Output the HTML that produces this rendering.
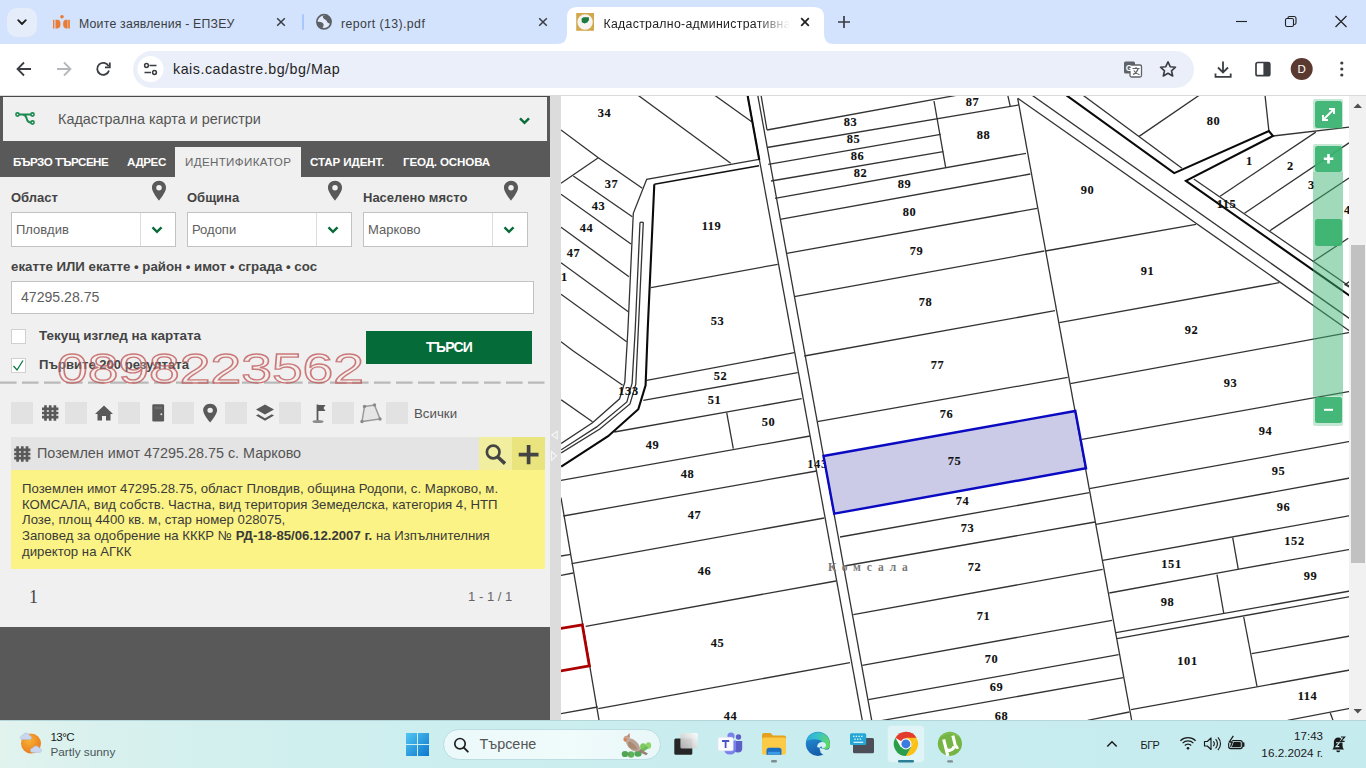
<!DOCTYPE html>
<html lang="bg">
<head>
<meta charset="utf-8">
<title>Кадастрално-административна информационна система</title>
<style>
*{box-sizing:border-box;margin:0;padding:0}
html,body{width:1366px;height:768px;overflow:hidden;background:#fff;font-family:"Liberation Sans",sans-serif;}
.abs{position:absolute}
#root{position:relative;width:1366px;height:768px;overflow:hidden;background:#fff}
.t{position:absolute;white-space:nowrap;line-height:1}
/* chrome */
#tabstrip{left:0;top:0;width:1366px;height:44px;background:#d3e3fd}
#toolbar{left:0;top:44px;width:1366px;height:51px;background:#fff}
#tbline{left:0;top:95px;width:1366px;height:1px;background:#dadada}
#urlpill{left:133px;top:51px;width:1061px;height:37px;border-radius:18.5px;background:#ebeff9}
.tabtxt{font-size:12.3px;color:#3a3d42;top:18px}
/* panel */
#panel{left:0;top:96px;width:550px;height:624px;background:#595959}
#divider{left:550px;top:96px;width:11px;height:624px;background:#dcdcdc}
.lbl{font-weight:bold;font-size:13px;color:#444}
.sel{position:absolute;height:35px;background:#fff;border:1px solid #c2c2c2}
.sel i{position:absolute;right:34px;top:0;bottom:0;width:1px;background:#dcdcdc}
.seltxt{font-size:13px;color:#5e5e5e}
.tab{font-size:11.6px;color:#fff;top:155.6px;font-weight:bold}
.sq{position:absolute;width:22px;height:22px;top:402px;background:#e2e2e2}
/* taskbar */
#taskbar{left:0;top:720px;width:1366px;height:48px;background:linear-gradient(90deg,#e2f3ee 0%,#d9f1ee 7%,#cfefee 22%,#c9edef 50%,#c6ebef 100%);border-top:1px solid #b4d6da}
</style>
</head>
<body>
<div id="root">

<!-- ================= BROWSER CHROME ================= -->
<div id="tabstrip" class="abs"></div>
<div id="toolbar" class="abs"></div>
<div id="tbline" class="abs"></div>
<div id="urlpill" class="abs"></div>

<!-- tab search -->
<div class="abs" style="left:7px;top:7.5px;width:30px;height:29px;border-radius:10px;background:#e5edfb"></div>
<svg class="abs" style="left:0;top:0" width="1366" height="96" viewBox="0 0 1366 96" fill="none">
  <!-- chevron -->
  <path d="M18.2 20.2 L22 24 L25.8 20.2" stroke="#1f1f1f" stroke-width="1.8" stroke-linecap="round" stroke-linejoin="round"/>
  <!-- favicon 1 (EPZEU) -->
  <g fill="#ea7b34">
    <rect x="53" y="19.8" width="1.1" height="8.7"/>
    <rect x="54.7" y="19.8" width="0.9" height="8.7" opacity=".85"/>
    <path d="M56 19.8 h1.5 q3 0 3 4.3 q0 4.4 -3 4.4 h-1.5z"/>
    <circle cx="62" cy="16.8" r="1.8"/>
    <path d="M67.6 19.8 h-1.5 q-3 0 -3 4.3 q0 4.4 3 4.4 h1.5z"/>
    <rect x="68.2" y="19.8" width="1.7" height="8.7"/>
  </g>
  <!-- close 1 -->
  <path d="M277.2 18.2 L284.8 25.8 M284.8 18.2 L277.2 25.8" stroke="#3a3d42" stroke-width="1.5"/>
  <!-- separator -->
  <rect x="302" y="14" width="2" height="16" rx="1" fill="#a8c7fa"/>
  <!-- globe -->
  <circle cx="324" cy="21.8" r="7.1" fill="#e2ebfb" stroke="#5d6066" stroke-width="1.7"/>
  <path d="M322.8 16 Q322.5 18.5 325 19.5 Q327 20.3 327.5 22.5 Q329 24 331 23.5 Q332 19.5 329.5 16.8 Q326.5 14 322.8 16z" fill="#5d6066"/>
  <path d="M316.6 22.3 Q319.5 21.2 322.5 22.8 Q324.5 24.5 323 27 Q322 28.8 321.3 29 Q317 27.5 316.6 22.3z" fill="#5d6066"/>
  <!-- close 2 -->
  <path d="M539.2 18.2 L546.8 25.8 M546.8 18.2 L539.2 25.8" stroke="#3a3d42" stroke-width="1.5"/>
  <!-- active tab -->
  <path d="M557 44 Q567 44 567 34 L567 17 Q567 7 577 7 L814 7 Q824 7 824 17 L824 34 Q824 44 834 44 Z" fill="#fff"/>
  <!-- favicon 3 -->
  <rect x="576.2" y="13" width="17.8" height="17.8" fill="#d3a84c"/>
  <circle cx="585.1" cy="22" r="7.7" fill="#f6f3f1"/>
  <path d="M581.5 18.8 L583.5 17.3 L588.8 17.2 L589 20 L587.3 22.5 L584.5 23.6 L581.8 22.3 Z" fill="#1c7a3e"/>
  <!-- close 3 -->
  <path d="M801.2 18.2 L808.8 25.8 M808.8 18.2 L801.2 25.8" stroke="#1f1f1f" stroke-width="1.7"/>
  <!-- plus -->
  <path d="M844 16 V28 M838 22 H850" stroke="#3a3d42" stroke-width="1.7"/>
  <!-- window controls -->
  <path d="M1236 21.5 H1247" stroke="#222" stroke-width="1.1"/>
  <rect x="1285.5" y="18.5" width="8" height="8" rx="1.5" stroke="#222" stroke-width="1.1"/>
  <path d="M1288 18.5 V17.5 Q1288 16.5 1289.5 16.5 H1294 Q1296 16.5 1296 18.5 V23 Q1296 24.5 1294 24.5" stroke="#222" stroke-width="1.1"/>
  <path d="M1335.5 16 L1346.5 27 M1346.5 16 L1335.5 27" stroke="#222" stroke-width="1.2"/>
  <!-- toolbar white rounded corner handled by toolbar div -->
  <!-- back -->
  <path d="M31 69 H18 M24 62.5 L17.5 69 L24 75.5" stroke="#3a3d42" stroke-width="1.8" stroke-linejoin="miter"/>
  <!-- forward -->
  <path d="M57 69 H70 M64 62.5 L70.5 69 L64 75.5" stroke="#b4b7bb" stroke-width="1.8"/>
  <!-- reload -->
  <path d="M108.6 66.2 A6 6 0 1 0 109 70.5" stroke="#3a3d42" stroke-width="1.8"/>
  <path d="M109.8 62.5 V67.3 H105" stroke="#3a3d42" stroke-width="1.8"/>
  <!-- site info circle -->
  <circle cx="150.5" cy="69" r="13" fill="#fff"/>
  <path d="M149.5 65.5 H156.5 M144.5 72.5 H151" stroke="#3a3d42" stroke-width="1.7"/>
  <circle cx="146.5" cy="65.5" r="1.9" stroke="#3a3d42" stroke-width="1.5"/>
  <circle cx="154.5" cy="72.5" r="1.9" stroke="#3a3d42" stroke-width="1.5"/>
  <!-- translate -->
  <rect x="1124" y="61.5" width="11" height="12" rx="1.5" fill="#5f6368"/>
  <rect x="1130" y="65" width="11.5" height="12" rx="1.5" fill="#fff" stroke="#5f6368" stroke-width="1.3"/>
  <text x="1125.8" y="71" font-family="Liberation Sans" font-size="8.5" font-weight="bold" fill="#fff">G</text>
  <path d="M1132.5 68.5 H1139.5 M1136 67 V68.5 M1138.3 68.5 Q1137 72.5 1133 74.5 M1133.8 70.5 Q1135.5 73.5 1139.5 74.8" stroke="#5f6368" stroke-width="1.1"/>
  <!-- star -->
  <path d="M1168 61.8 L1170.2 66.7 L1175.5 67.2 L1171.5 70.8 L1172.7 76 L1168 73.2 L1163.3 76 L1164.5 70.8 L1160.5 67.2 L1165.8 66.7 Z" stroke="#3a3d42" stroke-width="1.6" stroke-linejoin="round"/>
  <!-- download -->
  <path d="M1223 61.5 V72 M1218 67.5 L1223 72.5 L1228 67.5 M1215.5 73.5 V76.8 H1230.7 V73.5" stroke="#3a3d42" stroke-width="1.8"/>
  <!-- side panel -->
  <rect x="1256" y="62.5" width="13.8" height="13.2" rx="1.8" stroke="#3a3d42" stroke-width="1.7"/>
  <rect x="1263.4" y="62.5" width="6.4" height="13.2" fill="#3a3d42"/>
  <!-- avatar -->
  <circle cx="1301.7" cy="69" r="11" fill="#5a3a30"/>
  <text x="1301.7" y="73.3" text-anchor="middle" font-family="Liberation Sans" font-size="11.5" fill="#fff">D</text>
  <!-- menu -->
  <circle cx="1341.8" cy="63" r="1.6" fill="#3a3d42"/><circle cx="1341.8" cy="69" r="1.6" fill="#3a3d42"/><circle cx="1341.8" cy="75" r="1.6" fill="#3a3d42"/>
</svg>
<div class="t tabtxt" style="left:79px;letter-spacing:0.2px">Моите заявления - ЕПЗЕУ</div>
<div class="t tabtxt" style="left:341px;letter-spacing:0.42px">report (13).pdf</div>
<div class="t tabtxt" style="left:603.5px;width:186px;overflow:hidden;color:#1f1f1f;letter-spacing:0.3px;-webkit-mask-image:linear-gradient(90deg,#000 82%,transparent 100%);mask-image:linear-gradient(90deg,#000 82%,transparent 100%)">Кадастрално-административна информационна</div>
<div class="t" style="left:173px;top:62px;font-size:14.3px;letter-spacing:0.5px;color:#1f1f1f">kais.cadastre.bg/bg/Map</div>
<!--CHROME-->

<!-- ================= LEFT PANEL ================= -->
<div id="panel" class="abs"></div>
<div id="divider" class="abs"></div>

<div class="abs" style="left:0;top:96px;width:550px;height:1px;background:#4a4a4a"></div>
<div class="abs" style="left:3px;top:97px;width:544px;height:44px;background:#f0f0f0"></div>
<div class="abs" style="left:0;top:177.4px;width:547px;height:449.6px;background:#f0f0f0"></div>
<div class="abs" style="left:547px;top:177.4px;width:3px;height:449.6px;background:#f0f0f0"></div>
<div class="abs" style="left:175px;top:147px;width:126px;height:31px;background:#f0f0f0"></div>
<div class="t" style="left:58px;top:111.5px;font-size:14.4px;color:#555">Кадастрална карта и регистри</div>
<div class="t tab" style="left:13px;letter-spacing:-0.5px">БЪРЗО ТЪРСЕНЕ</div>
<div class="t tab" style="left:127px;letter-spacing:-0.4px">АДРЕС</div>
<div class="t tab" style="left:185px;color:#666;font-weight:normal;letter-spacing:0.35px">ИДЕНТИФИКАТОР</div>
<div class="t tab" style="left:310px;letter-spacing:-0.1px">СТАР ИДЕНТ.</div>
<div class="t tab" style="left:403px;letter-spacing:-0.15px">ГЕОД. ОСНОВА</div>
<div class="t lbl" style="left:11px;top:191px">Област</div>
<div class="t lbl" style="left:187px;top:191px">Община</div>
<div class="t lbl" style="left:363px;top:191px">Населено място</div>
<div class="sel" style="left:11px;top:212px;width:165px"><i></i></div>
<div class="sel" style="left:187px;top:212px;width:165px"><i></i></div>
<div class="sel" style="left:363px;top:212px;width:165px"><i></i></div>
<div class="t seltxt" style="left:16px;top:222.8px">Пловдив</div>
<div class="t seltxt" style="left:192px;top:222.8px">Родопи</div>
<div class="t seltxt" style="left:368px;top:222.8px">Марково</div>
<div class="t lbl" style="left:11px;top:260px;font-size:13.27px">екатте ИЛИ екатте • район • имот • сграда • сос</div>
<div class="abs" style="left:11px;top:281px;width:523px;height:33px;background:#fff;border:1px solid #c2c2c2"></div>
<div class="t seltxt" style="left:21px;top:290px;font-size:14.1px">47295.28.75</div>
<div class="abs" style="left:11px;top:329px;width:15px;height:15px;background:#fff;border:1px solid #d0d0d0"></div>
<div class="abs" style="left:11px;top:358px;width:15px;height:15px;background:#fff;border:1px solid #d0d0d0"></div>
<div class="t lbl" style="left:39px;top:329px;font-size:13.43px">Текущ изглед на картата</div>
<div class="t lbl" style="left:39px;top:358px;font-size:13.08px">Първите 200 резултата</div>
<div class="abs" style="left:366px;top:331px;width:166px;height:33px;background:#056b38"></div>
<div class="t" style="left:366px;width:166px;text-align:center;top:339.5px;font-size:14px;font-weight:bold;letter-spacing:-0.75px;color:#fff">ТЪРСИ</div>
<div class="sq" style="left:11px"></div><div class="sq" style="left:65.2px"></div><div class="sq" style="left:117.8px"></div><div class="sq" style="left:171.7px"></div><div class="sq" style="left:225px"></div><div class="sq" style="left:279.2px"></div><div class="sq" style="left:332.1px"></div><div class="sq" style="left:386.2px"></div>
<div class="t" style="left:414px;top:406.5px;font-size:13.3px;color:#555">Всички</div>
<div class="abs" style="left:11px;top:437px;width:534px;height:33px;background:#e4e4e4"></div>
<div class="abs" style="left:479px;top:437px;width:33px;height:33px;background:#f1ee9f"></div>
<div class="abs" style="left:512px;top:437px;width:33px;height:33px;background:#e9e47e"></div>
<div class="t" style="left:37px;top:446px;font-size:14.39px;color:#555">Поземлен имот 47295.28.75 с. Марково</div>
<div class="abs" style="left:11px;top:470px;width:534px;height:98.5px;background:#fbf385"></div>
<div class="abs" style="left:22px;top:481.3px;width:520px;font-size:13.2px;line-height:15.6px;color:#3a3a3a;white-space:nowrap">Поземлен имот 47295.28.75, област Пловдив, община Родопи, с. Марково, м.<br>КОМСАЛА, вид собств. Частна, вид територия Земеделска, категория 4, НТП<br>Лозе, площ 4400 кв. м, стар номер 028075,<br>Заповед за одобрение на КККР № <b>РД-18-85/06.12.2007 г.</b> на Изпълнителния<br>директор на АГКК</div>
<div class="t" style="left:29px;top:588px;font-family:'Liberation Serif',serif;font-size:18px;color:#444">1</div>
<div class="t" style="left:468px;top:589.5px;font-size:13.1px;color:#666">1 - 1 / 1</div>
<svg class="abs" style="left:0;top:96px" width="561" height="624" viewBox="0 96 561 624" fill="none">
  <!-- header icon -->
  <g stroke="#1d8a52" stroke-width="2">
    <path d="M18 114.5 H22.5 Q25.5 114.5 26.5 118 Q27.5 122.5 31 122.5 M22.5 114.5 H31"/>
    <circle cx="17.5" cy="114.5" r="1.6" fill="#f0f0f0" stroke-width="1.6"/><circle cx="32.5" cy="114.5" r="1.6" fill="#f0f0f0" stroke-width="1.6"/><circle cx="32.5" cy="122.5" r="1.6" fill="#f0f0f0" stroke-width="1.6"/>
  </g>
  <path d="M520.0 118.3 L524.5 122.8 L529.0 118.3" stroke="#0a6b3a" stroke-width="2.4" fill="none" stroke-linejoin="miter"/>
  <path transform="translate(151.3,180.3) scale(1.1)" d="M7 0.5 C3.2 0.5 0.6 3.3 0.6 6.8 C0.6 11 7 18.5 7 18.5 C7 18.5 13.4 11 13.4 6.8 C13.4 3.3 10.8 0.5 7 0.5 Z M7 4.3 A2.5 2.5 0 1 1 7 9.3 A2.5 2.5 0 1 1 7 4.3 Z" fill="#595959" fill-rule="evenodd"/><path transform="translate(327.3,180.3) scale(1.1)" d="M7 0.5 C3.2 0.5 0.6 3.3 0.6 6.8 C0.6 11 7 18.5 7 18.5 C7 18.5 13.4 11 13.4 6.8 C13.4 3.3 10.8 0.5 7 0.5 Z M7 4.3 A2.5 2.5 0 1 1 7 9.3 A2.5 2.5 0 1 1 7 4.3 Z" fill="#595959" fill-rule="evenodd"/><path transform="translate(503.3,180.3) scale(1.1)" d="M7 0.5 C3.2 0.5 0.6 3.3 0.6 6.8 C0.6 11 7 18.5 7 18.5 C7 18.5 13.4 11 13.4 6.8 C13.4 3.3 10.8 0.5 7 0.5 Z M7 4.3 A2.5 2.5 0 1 1 7 9.3 A2.5 2.5 0 1 1 7 4.3 Z" fill="#595959" fill-rule="evenodd"/>
  <path d="M152.5 227.3 L157 231.8 L161.5 227.3" stroke="#0a6b3a" stroke-width="2.4" fill="none" stroke-linejoin="miter"/><path d="M328.5 227.3 L333 231.8 L337.5 227.3" stroke="#0a6b3a" stroke-width="2.4" fill="none" stroke-linejoin="miter"/><path d="M504.5 227.3 L509 231.8 L513.5 227.3" stroke="#0a6b3a" stroke-width="2.4" fill="none" stroke-linejoin="miter"/>
  <!-- check -->
  <path d="M13.5 366 L17 370 L23 360.5" stroke="#0a7a40" stroke-width="1.3"/>
  <!-- dashed line -->
  <path d="M0 382.7 H544.5" stroke="#b9b9b9" stroke-width="2.2" stroke-dasharray="16.6 5.4"/>
  <!-- icon row -->
  <g stroke="#595959" stroke-width="2.7"><path d="M45.5 405.2 V420.8 M50.2 405.2 V420.8 M54.9 405.2 V420.8 M42 408.8 H58.4 M42 413 H58.4 M42 417.2 H58.4"/></g>
  <path d="M95 414 L104 405.5 L113 414 H110.5 V420.5 H106 V416 H102 V420.5 H97.5 V414 Z" fill="#595959"/>
  <rect x="152.3" y="404.3" width="11.8" height="17.2" rx="1.3" fill="#595959"/><rect x="154.3" y="406.6" width="7.8" height="2.6" fill="#6e6e6e"/><circle cx="161.3" cy="414.3" r="1" fill="#e0e0e0"/>
  <path transform="translate(202.5,403.2) scale(1.09,1.04)" d="M7 0.5 C3.2 0.5 0.6 3.3 0.6 6.8 C0.6 11 7 18.5 7 18.5 C7 18.5 13.4 11 13.4 6.8 C13.4 3.3 10.8 0.5 7 0.5 Z M7 4.3 A2.5 2.5 0 1 1 7 9.3 A2.5 2.5 0 1 1 7 4.3 Z" fill="#595959" fill-rule="evenodd"/>
  <path d="M265 404.5 L274 409.5 L265 414.5 L256 409.5 Z" fill="#595959"/>
  <path d="M258.2 414.2 L256 415.5 L265 420.8 L274 415.5 L271.8 414.2 L265 418.2 Z" fill="#595959"/>
  <path d="M317.5 404.5 V421" stroke="#595959" stroke-width="1.8"/><path d="M318 405 H325.5 L323.5 408 L325.5 411 H318 Z" fill="#595959"/><ellipse cx="318" cy="421.5" rx="5.5" ry="1.5" fill="#8a8a8a"/>
  <path d="M364.5 406.5 L374.5 405 L380 419 L362 421.5 Z" stroke="#9a9a9a" stroke-width="1.5" fill="#e6e6e6"/>
  <g fill="#8a8a8a"><circle cx="364.5" cy="406.5" r="1.7"/><circle cx="374.5" cy="405" r="1.7"/><circle cx="380" cy="419" r="1.7"/><circle cx="362" cy="421.5" r="1.7"/></g>
  <!-- result row icons -->
  <g stroke="#595959" stroke-width="2.7"><path d="M17.6 446.2 V461.8 M22.3 446.2 V461.8 M27 446.2 V461.8 M14.2 449.8 H30.4 M14.2 454 H30.4 M14.2 458.2 H30.4"/></g>
  <circle cx="493.2" cy="452" r="6.3" stroke="#444" stroke-width="2.7"/><path d="M497.8 457 L505 463.6" stroke="#444" stroke-width="3.5"/>
  <path d="M528.6 445 V464.2 M518.7 454.6 H538.5" stroke="#444" stroke-width="3.7"/>
  <!-- divider handles -->
  <path d="M557.2 431.2 L551.8 435 L557.2 438.8 Z M551.5 451.5 L556.5 455.8 L551.5 460.2 Z" stroke="#f6f6f6" stroke-width="1.1" fill="none"/>
</svg>
<!-- watermark -->
<svg class="abs" style="left:50px;top:345px" width="330" height="50" viewBox="50 345 330 50">
  <text x="57" y="383" font-family="Liberation Sans" font-size="42.5" textLength="307" lengthAdjust="spacingAndGlyphs" fill="rgba(255,235,235,0.22)" stroke="rgba(190,80,80,0.75)" stroke-width="1.3">0898223562</text>
</svg>
<!--PANEL-->

<!-- ================= MAP ================= -->
<!--MAPSTART--><svg class="abs" style="left:561px;top:96px" width="789" height="624" viewBox="561 96 789 624" fill="none">
<rect x="561" y="96" width="789" height="624" fill="#fff"/>
<text x="817.5" y="467.9" font-family="Liberation Serif" font-weight="bold" font-size="12.4" letter-spacing="0.6" fill="#111" text-anchor="middle">143</text>
<path d="M823.5 456 L1075.3 411 L1086 468.3 L834.2 513.7 Z" fill="#cbcbe8"/>
<g stroke="#333" stroke-width="1.3">
<path d="M747.5 95 L862.4 721"/>
<path d="M757.7 95 L871.8 721"/>
<path d="M1017.7 98.3 L1131.8 721"/>
<path d="M761.0 95.0 L767.0 130.0"/>
<path d="M767.0 130.0 L958 95"/>
<path d="M767 147.5 L1018.9 104.9"/>
<path d="M934.0 101.0 L945.7 167.7"/>
<path d="M1007.7 95 L1010.3 106.7"/>
<path d="M768.3 164.3 L940.7 134.3"/>
<path d="M771.0 181.0 L943.3 151.7"/>
<path d="M775 198.3 L1026 153.3"/>
<path d="M780 219.3 L1030.3 174"/>
<path d="M786.7 253.3 L1037 208.3"/>
<path d="M794.3 296.7 L1044.3 251"/>
<path d="M804.3 356 L1055 310.7"/>
<path d="M817.3 421.7 L1067.7 377.4"/>
<path d="M840 537 L1089.3 492.7"/>
<path d="M844.3 566 L1095 522"/>
<path d="M853.3 614.7 L1102.7 569.3"/>
<path d="M862.3 665.3 L1112 620.3"/>
<path d="M868.3 699.7 L1118.7 654.7"/>
<path d="M872 722.3 L1123.3 677.7"/>
<path d="M1087.7 720.3 L1129.3 712"/>
<path d="M1017.7 98.3 L1350 331.2"/>
<path d="M1031.7 95 L1350 318.9"/>
<path d="M1045.3 251 L1196 224.3"/>
<path d="M1059.3 322.7 L1279.3 282.7"/>
<path d="M1070.3 383.7 L1350 332.4"/>
<path d="M1082 439.3 L1350 391.4"/>
<path d="M1089.3 488.7 L1350 441.4"/>
<path d="M1096 524.3 L1350 478"/>
<path d="M1102.7 560.3 L1350 515.7"/>
<path d="M1109.3 593 L1237.7 569.3 L1350 549.4"/>
<path d="M1232.7 537.7 L1238.3 569.3"/>
<path d="M1217 574.7 L1223.7 613"/>
<path d="M1116 632.7 L1350 591"/>
<path d="M1117 638.7 L1350 596.7"/>
<path d="M1243.7 617 L1257 686.3"/>
<path d="M1131 709.7 L1350 670"/>
<path d="M1251.7 653.7 L1350 636"/>
<path d="M1287.7 720.3 L1350 708.4"/>
<path d="M1330.3 713 L1333 720.3"/>
<path d="M1082.7 95 L1182.0 168.2"/>
<path d="M1193.8 179.0 L1350 286.7"/>
<path d="M1139.1 136.4 L1199.6 95.0"/>
<path d="M1265.0 95.0 L1268.9 131.1"/>
<path d="M1272.9 136.0 L1349.0 127.2"/>
<path d="M1220.1 196.2 L1315.8 132.1"/>
<path d="M1244.5 213.2 L1349.0 142.9"/>
<path d="M1269.9 230.7 L1349.0 178.0"/>
<path d="M1312.7 261.7 L1348.3 238.3"/>
<path d="M1349.5 281.5 L1345 284.6 L1349.5 287.3"/>
<path d="M561 497.7 L599.5 723"/>
<path d="M646.7 380.3 L794.3 352.7"/>
<path d="M643.3 400.3 L797.7 372.7"/>
<path d="M614.3 432.0 L801.7 398.7"/>
<path d="M561.0 480.3 L810.0 436.0"/>
<path d="M726.7 412.7 L733.3 448.7"/>
<path d="M563.3 516.0 L816.7 471.0"/>
<path d="M571.7 563.7 L824.3 518.0"/>
<path d="M585.7 626.3 L836.0 581.0"/>
<path d="M598.3 708.7 L850.0 662.7"/>
<path d="M561.0 556.0 L571.0 554.3"/>
<path d="M561.0 575.3 L573.3 573.0"/>
<path d="M561.0 713.7 L597.7 707.0"/>
<path d="M651.0 287.7 L777.7 264.3"/>
<path d="M637.7 95.0 L730.7 163.3"/>
<path d="M714.3 95.0 L751.7 121.7"/>
<path d="M561.0 130.0 L598.3 157.7 L642.3 188.3"/>
<path d="M561.0 183.3 L598.3 157.7"/>
<path d="M573.3 176.0 L632.3 216.7"/>
<path d="M561.0 194.3 L631.0 244.0"/>
<path d="M561.0 227.3 L629.0 276.7"/>
<path d="M561.0 262.7 L628.3 311.7"/>
<path d="M561.0 294.3 L626.7 341.7"/>
<path d="M561.0 341.7 L573.3 351 L622.7 385.2"/>
<path d="M561.2 399.8 L592.5 421.7"/>
<path d="M759.0 159.3 L646.7 179.3 L633.3 213.3 L627.9 330.0 L624.8 382.1 L619.6 398.8 L592.5 422.7 L561.2 443.5"/>
<path d="M640.0 222.3 L635.2 330.0 L632.1 383.1 L626.9 401.9 L596.7 426.9 L561.2 449.8"/>
<path d="M643.3 222.3 L638.3 330.0 L635.8 384.2 L630.0 404.0 L599.8 429.0 L561.2 452.9"/>
<path d="M640.0 222.3 L643.3 222.3"/>
</g>
<g stroke="#0a0a0a" stroke-width="2.1" stroke-linejoin="miter">
<path d="M747.5 95 L759.3 160"/>
<path d="M1066 95 L1174.2 173.1 L1268.9 131.1 L1272.9 136.0 L1185.9 180.9 L1350 296"/>
<path d="M654.3 184.3 L647.7 330.0 L645.6 385.2 L638.3 409.2 L608.1 436.2 L561.2 466.5"/>
</g>
<g stroke="#111" stroke-width="1.6">
<path d="M759.0 165.7 L654.3 184.3"/>
</g>
<path d="M823.5 456 L1075.3 411 L1086 468.3 L834.2 513.7 Z" stroke="#0a0ac2" stroke-width="2.4" stroke-linejoin="miter"/>
<path d="M560 628.5 L582.3 624.8 L589.4 665.9 L560 671.1" stroke="#ac0000" stroke-width="2.8"/>
<g font-family="Liberation Serif" font-weight="bold" font-size="12.4" letter-spacing="0.6" fill="#111" stroke="#111" stroke-width="0.12" text-anchor="middle">
<text x="604.5" y="116.9">34</text>
<text x="611.5" y="187.9">37</text>
<text x="598.5" y="209.9">43</text>
<text x="586.5" y="231.9">44</text>
<text x="573.5" y="256.9">47</text>
<text x="564.5" y="280.9">1</text>
<text x="711.5" y="229.9">119</text>
<text x="717.5" y="324.9">53</text>
<text x="720.5" y="379.9">52</text>
<text x="714.5" y="403.9">51</text>
<text x="768.5" y="425.9">50</text>
<text x="652.5" y="448.9">49</text>
<text x="687.5" y="477.9">48</text>
<text x="694.5" y="518.9">47</text>
<text x="704.5" y="574.9">46</text>
<text x="717.5" y="646.9">45</text>
<text x="730.5" y="719.9">44</text>
<text x="628.5" y="394.9">133</text>
<text x="850.5" y="125.9">83</text>
<text x="853.5" y="142.9">85</text>
<text x="857.5" y="159.9">86</text>
<text x="860.5" y="176.9">82</text>
<text x="904.5" y="187.9">89</text>
<text x="909.5" y="215.9">80</text>
<text x="916.5" y="254.9">79</text>
<text x="925.5" y="305.9">78</text>
<text x="937.5" y="368.9">77</text>
<text x="946.5" y="417.9">76</text>
<text x="954.5" y="464.9">75</text>
<text x="962.5" y="504.9">74</text>
<text x="967.5" y="531.9">73</text>
<text x="974.5" y="570.9">72</text>
<text x="983.5" y="619.9">71</text>
<text x="991.5" y="662.9">70</text>
<text x="996.5" y="690.9">69</text>
<text x="1001.5" y="719.9">68</text>
<text x="972.5" y="105.9">87</text>
<text x="983.5" y="138.9">88</text>
<text x="1087.5" y="193.9">90</text>
<text x="1147.5" y="274.9">91</text>
<text x="1191.5" y="333.9">92</text>
<text x="1230.5" y="386.9">93</text>
<text x="1265.5" y="434.9">94</text>
<text x="1278.5" y="474.9">95</text>
<text x="1283.5" y="510.9">96</text>
<text x="1171.5" y="567.9">151</text>
<text x="1294.5" y="544.9">152</text>
<text x="1167.5" y="605.9">98</text>
<text x="1310.5" y="579.9">99</text>
<text x="1187.5" y="664.9">101</text>
<text x="1307.5" y="699.9">114</text>
<text x="1213.5" y="124.9">80</text>
<text x="1249.5" y="164.9">1</text>
<text x="1290.5" y="169.9">2</text>
<text x="1311.5" y="188.9">3</text>
<text x="1347.5" y="213.9">4</text>
<text x="1226.5" y="207.9">115</text>
</g>
<text x="828" y="571" font-family="Liberation Serif" font-weight="bold" font-size="11.5" fill="#787878" letter-spacing="5.9">Комсала</text>
</svg><!--MAPEND-->

<!-- map controls -->
<div class="abs" style="left:1313px;top:99px;width:30px;height:30px;background:rgba(60,179,113,0.30);border-radius:2px"></div>
<div class="abs" style="left:1315px;top:101px;width:27px;height:26.5px;background:rgba(58,178,112,0.92);border-radius:2.5px"></div>
<div class="abs" style="left:1313px;top:143.5px;width:30px;height:282px;background:rgba(60,179,113,0.30);border-radius:2px"></div>
<div class="abs" style="left:1313px;top:172px;width:30px;height:224px;background:rgba(60,179,113,0.26)"></div>
<div class="abs" style="left:1315px;top:145.5px;width:27px;height:26.5px;background:rgba(58,178,112,0.92);border-radius:2.5px"></div>
<div class="abs" style="left:1315px;top:219.3px;width:27px;height:27px;background:rgba(58,178,112,0.94);border-radius:2.5px"></div>
<div class="abs" style="left:1315px;top:396.5px;width:27px;height:26.5px;background:rgba(58,178,112,0.92);border-radius:2.5px"></div>
<svg class="abs" style="left:1313px;top:99px" width="30" height="330" viewBox="1313 99 30 330" fill="none">
  <path d="M1323.5 119.5 L1333.5 109.5 M1329 109 H1334 V114 M1323 115 V120 H1328" stroke="#fff" stroke-width="1.9"/>
  <path d="M1328.5 154 V163.5 M1323.8 158.8 H1333.3" stroke="#fff" stroke-width="2.6"/>
  <path d="M1324 409.8 H1333" stroke="#fff" stroke-width="2"/>
</svg>
<!-- page scrollbar -->
<div class="abs" style="left:1349px;top:96px;width:17px;height:624px;background:#f1f1f1"></div>
<div class="abs" style="left:1351px;top:245px;width:14px;height:318px;background:#c1c1c1"></div>
<svg class="abs" style="left:1349px;top:96px" width="17" height="624" viewBox="1349 96 17 624">
  <path d="M1353.5 108 L1357.8 103.5 L1362 108 Z" fill="#505050"/>
  <path d="M1353.5 709 L1357.8 713.5 L1362 709 Z" fill="#505050"/>
</svg>
<!--MAP-->

<!-- ================= TASKBAR ================= -->
<div id="taskbar" class="abs"></div>

<div class="abs" style="left:443px;top:728.5px;width:218px;height:31px;border-radius:15.5px;background:linear-gradient(90deg,#ecf9fa,#f0fbfb 60%,#e9f7f8);border:1px solid #bcdde1"></div>
<div class="abs" style="left:887px;top:725px;width:38px;height:38px;border-radius:4px;background:#def4f6;border:1px solid #d2edf0"></div>
<div class="t" style="left:50.4px;top:731px;font-size:11.6px;letter-spacing:-0.55px;color:#1a1a1a">13°C</div>
<div class="t" style="left:50.4px;top:746.5px;font-size:11.8px;color:#4a5659">Partly sunny</div>
<div class="t" style="left:479.4px;top:737.4px;font-size:14.4px;color:#555">Търсене</div>
<div class="t" style="left:1140.6px;top:740px;font-size:10.9px;letter-spacing:-0.6px;color:#1a1a1a">БГР</div>
<div class="t" style="left:1250px;width:73px;text-align:right;top:731px;font-size:11.55px;color:#1a1a1a">17:43</div>
<div class="t" style="left:1250px;width:73px;text-align:right;top:747px;font-size:11.75px;color:#1a1a1a">16.2.2024 г.</div>
<svg class="abs" style="left:0;top:720px" width="1366" height="48" viewBox="0 720 1366 48" fill="none">
  <defs>
    <radialGradient id="sun" cx="0.4" cy="0.35" r="0.7"><stop offset="0" stop-color="#f9b233"/><stop offset="1" stop-color="#e9781c"/></radialGradient>
    <linearGradient id="win" x1="0" y1="0" x2="1" y2="1"><stop offset="0" stop-color="#52c6f3"/><stop offset="1" stop-color="#0b77cd"/></linearGradient>
    <linearGradient id="tv" x1="0" y1="1" x2="1" y2="0"><stop offset="0" stop-color="#b8b8b8"/><stop offset="1" stop-color="#ffffff"/></linearGradient>
    <linearGradient id="edgeb" x1="0.2" y1="0" x2="0.6" y2="1"><stop offset="0" stop-color="#2596d9"/><stop offset="1" stop-color="#1457a6"/></linearGradient><linearGradient id="edgeg" x1="0" y1="0.4" x2="1" y2="0.5"><stop offset="0" stop-color="#2eaee0"/><stop offset="0.5" stop-color="#39c4c4"/><stop offset="1" stop-color="#63db57"/></linearGradient>
  </defs>
  <!-- weather -->
  <circle cx="31" cy="743.5" r="10" fill="url(#sun)"/>
  <g fill="#c9d6ee" stroke="#a9bbdc" stroke-width=".5"><path d="M20.5 738.5 a2.6 2.6 0 0 1 2.3 -3.3 a3.7 3.7 0 0 1 6.8 0.3 a2.3 2.3 0 0 1 1.7 3.3 q-0.5 0.8 -1.7 0.8 h-7.5 q-1.3 -0.1 -1.6 -1.1z"/>
  <path d="M30.5 751.3 a2.6 2.6 0 0 1 2.3 -3.3 a3.7 3.7 0 0 1 6.8 0.3 a2.3 2.3 0 0 1 1.7 3.3 q-0.5 0.8 -1.7 0.8 h-7.5 q-1.3 -0.1 -1.6 -1.1z"/></g>
  <!-- windows -->
  <path d="M406 733 h11 v11 h-11z M418 733 h11 v11 h-11z M406 745 h11 v11 h-11z M418 745 h11 v11 h-11z" fill="url(#win)"/>
  <!-- search icon -->
  <circle cx="460" cy="743.7" r="5.2" stroke="#222" stroke-width="1.7"/><path d="M463.8 747.7 L467.8 751.7" stroke="#222" stroke-width="1.9" stroke-linecap="round"/>
  <!-- bird + cactus -->
  <g>
   <ellipse cx="625" cy="754" rx="3.3" ry="3.1" fill="#4ea653"/><ellipse cx="631" cy="754.5" rx="3.2" ry="3.3" fill="#5cb55a"/>
   <ellipse cx="638" cy="753.8" rx="3.7" ry="3" fill="#4fa855"/>
   <ellipse cx="643.2" cy="747" rx="3.1" ry="3.7" fill="#7cc95f"/><ellipse cx="648.5" cy="745.5" rx="2.7" ry="3.2" fill="#8fd56a"/>
   <path d="M640.5 751 q4 -1.5 7 -4" stroke="#6dbb5a" stroke-width="3"/>
   <path d="M640 749 L648 753.5 L646 755.2 L638.5 751.5z" fill="#9a7f76"/>
   <ellipse cx="633" cy="745" rx="8.3" ry="4.7" transform="rotate(42 633 745)" fill="#b9a193"/>
   <path d="M628 741 q5 1 9.5 8 q-5 1 -9 -2z" fill="#a8836c" opacity=".8"/>
   <circle cx="626.7" cy="739" r="3.2" fill="#c4a898"/>
   <path d="M626.5 736.5 L629.5 733 L630 737.5z" fill="#c98a74"/>
   <circle cx="625.3" cy="739.6" r="1.7" fill="#d9824f"/>
   <path d="M629 752.5 v3" stroke="#8a6f60" stroke-width=".8"/>
  </g>
  <!-- task view -->
  <rect x="674.3" y="738.5" width="18" height="16.3" rx="1.5" fill="#262626"/>
  <rect x="680.4" y="733" width="17.3" height="15.6" rx="1.5" fill="url(#tv)" opacity=".93"/>
  <!-- teams -->
  <circle cx="738.5" cy="737" r="2.7" fill="#5b5fc7"/><circle cx="731" cy="736" r="3.6" fill="#7b83eb"/>
  <path d="M733.5 741 h8.7 v7.5 q0 4 -4.3 4 q-4.4 0 -4.4 -4z" fill="#5b5fc7"/>
  <path d="M724 740.5 h12 v8 q0 6 -6 6 q-6 0 -6 -6z" fill="#7b83eb"/>
  <rect x="718" y="737.3" width="15.2" height="13.5" rx="1.5" fill="#fafaff"/>
  <rect x="718" y="737.3" width="15.2" height="13.5" rx="1.5" fill="none" stroke="#e3e3f3" stroke-width=".5"/>
  <path d="M722 741 h7.2 M725.6 741 v7" stroke="#4b53bc" stroke-width="1.8"/>
  <!-- explorer -->
  <path d="M762 735 q0 -2 2 -2 h6.5 l2.5 2.5 h11 q2 0 2 2 v4 h-24z" fill="#e5a01e"/>
  <rect x="762" y="737.5" width="24" height="17.2" rx="1.8" fill="#fbcb47"/>
  <path d="M766.5 754.7 v-4.5 q0 -2.5 2.5 -2.5 h10 q2.5 0 2.5 2.5 v4.5z" fill="#1b6fc2"/>
  <rect x="768" y="751.8" width="12" height="2.9" fill="#3a9be6"/>
  <rect x="771" y="760" width="6" height="2.5" rx="1.250" fill="#7d8d90"/>
  <!-- edge -->
  <circle cx="817.9" cy="743.8" r="12.1" fill="url(#edgeb)"/>
  <path d="M806.3 741 A12.1 12.1 0 0 1 830 744.5 Q830 749.5 824.5 749.5 Q821 749.3 822.3 746.5 Q824.5 741.5 818.5 739.8 Q811 738.5 806.3 741z" fill="url(#edgeg)"/>
  <path d="M817 747 q0.5 -5 5.5 -5 q4 0.5 3.5 4 q-0.5 2 -3 2 q-2 -0.2 -1.5 -1.8 q-2.5 1 -1.5 4 q1.5 3.5 6 3 q3 -0.5 5 -2.5 l1 -3 q-2 2 -6 2z" fill="#d3f0f2"/>
  <path d="M820.5 749.5 q3 3.5 10 0.5 l-1.5 3.5 q-5 3.5 -8.5 -1z" fill="#c9eef0"/>
  <!-- keyboard app -->
  <rect x="853" y="738" width="21" height="15.2" rx="1.5" fill="#4c4f57"/>
  <rect x="850" y="733.2" width="16.2" height="11.7" rx="1.5" fill="#24a6d6"/>
  <g fill="#e2f7fc"><rect x="853" y="735.7" width="1.4" height="1.3"/><rect x="855.7" y="735.7" width="1.4" height="1.3"/><rect x="858.4" y="735.7" width="1.4" height="1.3"/><rect x="861.1" y="735.7" width="1.4" height="1.3"/>
  <rect x="854.3" y="738.5" width="1.4" height="1.3"/><rect x="857" y="738.5" width="1.4" height="1.3"/><rect x="859.7" y="738.5" width="1.4" height="1.3"/><rect x="853.5" y="741.7" width="9.7" height="1.2"/></g>
  <!-- chrome -->
  <circle cx="905.9" cy="743.9" r="12.1" fill="#fff"/>
  <path d="M905.9 743.9 L895.4 737.850 A12.1 12.1 0 0 1 916.4 737.850 Z" fill="#e33b2e"/>
  <path d="M905.9 731.8 A12.1 12.1 0 0 1 916.4 737.850 L905.9 737.850z" fill="#e33b2e"/>
  <path d="M916.4 737.850 A12.1 12.1 0 0 1 905.9 756 L911.1 746.9 Z" fill="#fbc116"/>
  <path d="M916.4 737.850 L905.9 737.850 L911.1 746.9 Z" fill="#fbc116"/>
  <path d="M905.9 756 A12.1 12.1 0 0 1 895.4 737.850 L900.7 746.9 L911.1 746.9 Z" fill="#2a9e4b"/>
  <circle cx="905.9" cy="743.9" r="5.6" fill="#fff"/><circle cx="905.9" cy="743.9" r="4.5" fill="#3c7be0"/>
  <rect x="898" y="760" width="16" height="2.6" rx="1.3" fill="#2b7e95"/>
  <!-- utorrent -->
  <circle cx="949.9" cy="743.8" r="12.1" fill="#74b544"/>
  <path d="M941.5 736 q8 -6 17 0" stroke="#8cc85e" stroke-width="1.2" opacity=".7"/>
  <g transform="rotate(-14 950 744)"><path d="M945 738 v8.5 q0 3.6 3.7 3.6 q3.6 0 4.8 -3 M954.8 736.5 v9.5 q0 3.2 2.5 3.2 M945 745 v10" stroke="#fff" stroke-width="3.1" fill="none"/></g>
  <rect x="947.2" y="760.2" width="5.8" height="2.4" rx="1.2" fill="#7d8d90"/>
  <!-- chevron -->
  <path d="M1107.3 746.6 L1112 741.8 L1116.7 746.6" stroke="#1a1a1a" stroke-width="1.5"/>
  <!-- wifi -->
  <circle cx="1188" cy="748.3" r="1.3" fill="#1a1a1a"/>
  <path d="M1184.8 745.5 a4.5 4.5 0 0 1 6.4 0 M1182.6 743.1 a7.7 7.7 0 0 1 10.8 0 M1180.4 740.7 a10.9 10.9 0 0 1 15.2 0" stroke="#1a1a1a" stroke-width="1.250"/>
  <!-- volume -->
  <path d="M1204.5 741.5 h2.8 l3.7 -3.5 v11.5 l-3.7 -3.5 h-2.8z" stroke="#1a1a1a" stroke-width="1.150" stroke-linejoin="round"/>
  <path d="M1213.3 741.3 a3.4 3.4 0 0 1 0 4.9 M1215.6 739.2 a6.5 6.5 0 0 1 0 9.1 M1217.9 737.3 a9.3 9.3 0 0 1 0 12.9" stroke="#1a1a1a" stroke-width="1.150"/>
  <!-- battery -->
  <rect x="1228.7" y="740.6" width="13.6" height="8" rx="2" stroke="#1a1a1a" stroke-width="1.2"/>
  <rect x="1230.2" y="742" width="10.6" height="5.2" rx=".8" fill="#1a1a1a"/>
  <path d="M1243.7 743 v3.2" stroke="#1a1a1a" stroke-width="1.5" stroke-linecap="round"/>
  <path d="M1233.3 735.8 L1229.3 742 h3 l-1.8 4.8" stroke="#c8ecef" stroke-width="2.6" stroke-linejoin="round"/>
  <path d="M1233.3 735.8 L1229.3 742 h3 l-1.8 4.8" stroke="#1a1a1a" stroke-width="1.3" stroke-linejoin="round"/>
  <!-- bell -->
  <path d="M1332.3 749.4 q1.6 -1.3 1.6 -3.9 v-3.7 a4.3 4.3 0 0 1 8.6 0 v3.7 q0 2.6 1.6 3.9z" fill="#1a1a1a"/>
  <path d="M1336.3 750.4 a1.9 1.9 0 0 0 3.8 0z" fill="#1a1a1a"/>
  <path d="M1340.9 737 h3.7 l-3.7 4.3 h3.7" stroke="#c7ecef" stroke-width="2.4" stroke-linejoin="round"/>
  <path d="M1340.9 737 h3.7 l-3.7 4.3 h3.7" stroke="#1a1a1a" stroke-width="1.2"/>
  <path d="M1336 742.8 h3.3 l-3.3 3.8 h3.3" stroke="#c7ecef" stroke-width="1.1"/>
</svg>
<!--TASKBAR-->

</div>
</body>
</html>
